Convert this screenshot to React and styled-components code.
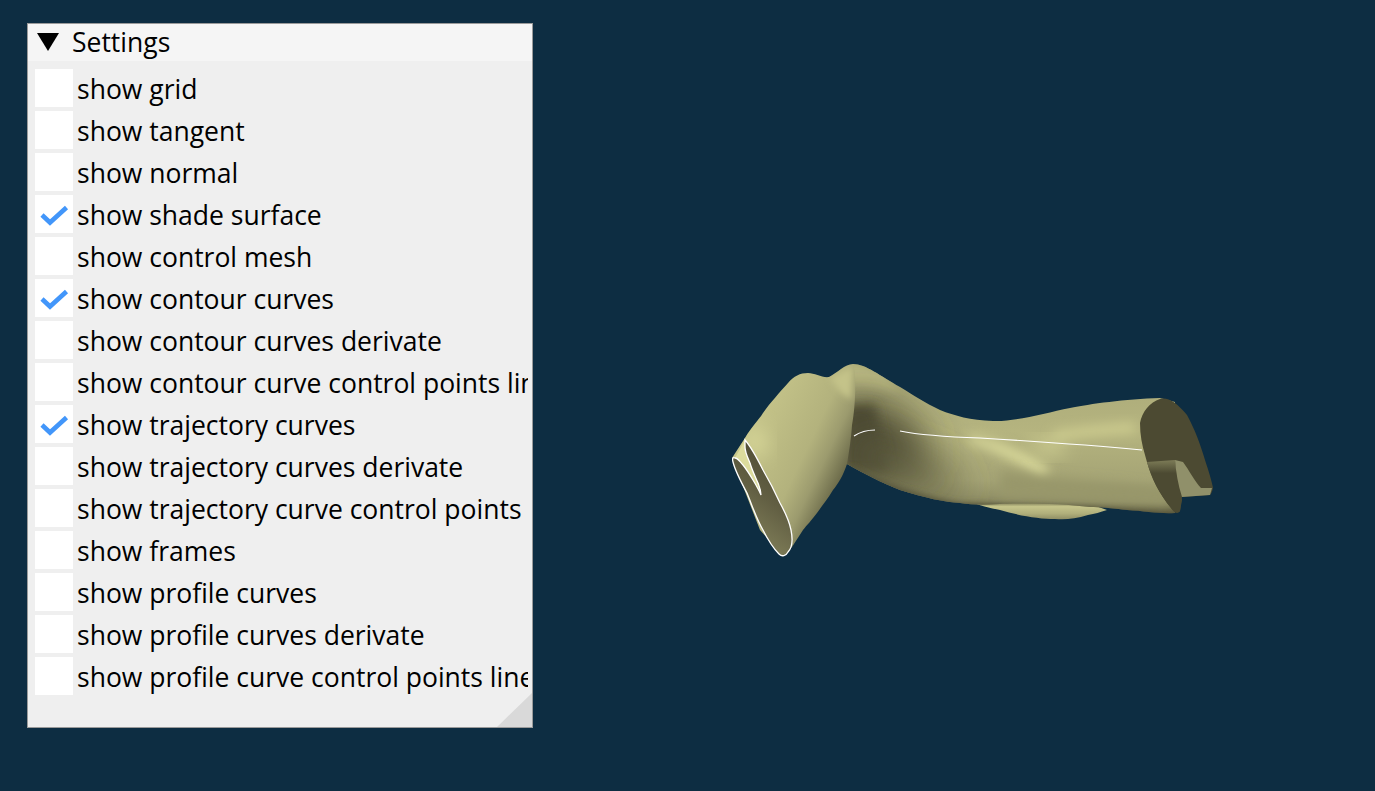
import React from 'react';
import styled, { createGlobalStyle } from 'styled-components';

const GlobalStyle = createGlobalStyle`
    html, body {
        margin: 0;
        padding: 0;
        background: #0d2d42;
    }
`;

const Page = styled.div`
    display: flex;
    width: 1375px;
    height: 791px;
    overflow: hidden;
    background: #0d2d42;
    font-family: 'Open Sans', 'Noto Sans', sans-serif;
`;

const Panel = styled.div`
    position: relative;
    box-sizing: border-box;
    flex: none;
    width: 506px;
    height: 705px;
    margin: 23px 0 0 27px;
    border: 1px solid #9a9a9a;
    background: #efefef;
    overflow: hidden;
`;

const TitleBar = styled.div`
    display: flex;
    align-items: center;
    gap: 13px;
    height: 37px;
    padding-left: 9px;
    background: #f5f5f5;
    color: #000;
    font-size: 26.5px;
    line-height: 35px;
`;

const Arrow = styled.span`
    width: 22px;
    height: 18px;
    margin-top: -1px;
    background: #000;
    clip-path: polygon(0 0, 100% 0, 50% 100%);
`;

const List = styled.div`
    display: flex;
    flex-direction: column;
    gap: 4px;
    padding: 8px 4px 0 7px;
`;

const Row = styled.div`
    display: flex;
    align-items: center;
    gap: 4px;
    height: 38px;
    overflow: hidden;
    white-space: nowrap;
    color: #000;
    font-size: 26.5px;
`;

const Label = styled.span`
    padding-top: 1px;
`;

const Box = styled.span`
    flex: none;
    width: 38px;
    height: 38px;
    background: #fff;
`;

const Grip = styled.div`
    position: absolute;
    right: 0;
    bottom: 0;
    width: 35px;
    height: 34px;
    background: #d9d9d9;
    clip-path: polygon(100% 0, 100% 100%, 0 100%);
`;

const Stage = styled.svg`
    flex: none;
    display: block;
    width: 842px;
    height: 791px;
`;

const settings = [
    { label: 'show grid' },
    { label: 'show tangent' },
    { label: 'show normal' },
    { label: 'show shade surface', on: true },
    { label: 'show control mesh' },
    { label: 'show contour curves', on: true },
    { label: 'show contour curves derivate' },
    { label: 'show contour curve control points lines' },
    { label: 'show trajectory curves', on: true },
    { label: 'show trajectory curves derivate' },
    { label: 'show trajectory curve control points lines' },
    { label: 'show frames' },
    { label: 'show profile curves' },
    { label: 'show profile curves derivate' },
    { label: 'show profile curve control points lines' },
];

const Check = () => (
    <svg width="38" height="38" viewBox="0 0 38 38">
        <path d="M7 20 L15 27.5 L31.5 12.5" fill="none" stroke="#4296fa" strokeWidth="4.6" />
    </svg>
);

const TUBE = `M853 364 C866 364 880 376 900 387 C915 396 925 403 940 410 C955 416 970 420 993 421
    C1015 422 1045 413 1070 408 C1090 404 1125 399 1160 398 L1175 402 L1175 513
    C1160 514 1145 511 1127 510 C1110 508 1100 507 1090 507 C1060 503 1020 503 1000 504
    C985 505 972 505 960 503 C945 502 925 498 900 490 C880 482 865 474 847 464 Z`;

const LOBE = `M732 458 L745 438 C752 426 758 421 763 413 C770 403 780 392 788 383 C794 376 800 373 808 373
    C815 373 822 378 829 377 C837 373 845 364 853 364 C857 378 855 410 852 425 C851 440 849 452 847 464
    C843 476 838 484 833 490 C827 500 822 506 817 513 C811 521 807 525 803 530
    L792 547 L783 556 L760 530 Z`;

const BELLY = `M966 500 C990 500 1040 498 1093 505 L1107 510 C1100 512 1095 514 1088 515
    C1075 519 1065 520 1055 519 C1040 519 1020 516 1000 510 C990 508 980 506 966 500 Z`;

const MOUTH = `M745 440 C752 448 758 460 763 470 C770 482 775 492 780 503 C785 512 789 520 791 530
    C793 540 792 548 788 552 C786 556 782 557 779 554 C773 548 768 540 763 530 C756 518 752 505 747 493
    C741 482 735 470 733 462 C732 458 733 457 735 458 C738 458 740 462 743 465 C747 470 750 475 753 480
    C756 485 759 490 761 495 C761 490 759 486 758 483 C755 476 752 470 750 463 C747 456 745 452 745 447 Z`;

const NOTCH = `M735 458 C738 458 740 462 743 465 C747 470 750 475 753 480 C756 485 759 490 761 495
    C761 490 759 486 758 483 C755 476 752 470 750 463 C747 456 745 452 745 447 L745 440 Z`;

const RIGHT_MOUTH = `M1140 423 C1142 412 1150 402 1160 399 C1168 397 1176 402 1187 415 C1195 430 1200 443 1205 460
    C1209 472 1212 482 1213 488 C1212 492 1211 494 1210 495 L1182 497 L1180 511 C1178 514 1174 513 1171 508
    C1160 495 1150 475 1145 455 C1142 445 1140 435 1140 423 Z`;

const Shape = () => (
    <Stage viewBox="533 0 842 791">
        <defs>
            <linearGradient id="tubeFill" x1="0" y1="0" x2="0" y2="1">
                <stop offset="0" stopColor="#a9a878" />
                <stop offset="0.45" stopColor="#b5b47f" />
                <stop offset="0.78" stopColor="#a5a475" />
                <stop offset="0.92" stopColor="#8f8e65" />
                <stop offset="1" stopColor="#5c5a3e" />
            </linearGradient>
            <linearGradient id="lobeFill" x1="0" y1="0" x2="1" y2="0.75">
                <stop offset="0" stopColor="#cfce93" />
                <stop offset="0.35" stopColor="#c0bf86" />
                <stop offset="0.6" stopColor="#b3b27d" />
                <stop offset="0.72" stopColor="#9c9b6e" />
                <stop offset="0.85" stopColor="#6d6c4b" />
                <stop offset="1" stopColor="#4c4a32" />
            </linearGradient>
            <linearGradient id="mouthFill" x1="0.2" y1="1" x2="0.6" y2="0">
                <stop offset="0" stopColor="#8a8960" />
                <stop offset="0.55" stopColor="#625f43" />
                <stop offset="1" stopColor="#4c4a32" />
            </linearGradient>
            <linearGradient id="bellyFill" x1="0" y1="0" x2="0" y2="1">
                <stop offset="0.1" stopColor="#6d6c4b" />
                <stop offset="0.35" stopColor="#c6c58b" />
                <stop offset="0.7" stopColor="#b0af7b" />
                <stop offset="1" stopColor="#8f8e64" />
            </linearGradient>
            <linearGradient id="bandFill" x1="0" y1="0" x2="0" y2="1">
                <stop offset="0" stopColor="#7d7c57" />
                <stop offset="0.25" stopColor="#4c4a32" />
                <stop offset="1" stopColor="#4c4a32" />
            </linearGradient>
            <clipPath id="tubeClip">
                <path d={TUBE} />
            </clipPath>
            <clipPath id="lobeClip">
                <path d={LOBE} />
            </clipPath>
            <filter id="soft6" x="-50%" y="-50%" width="200%" height="200%">
                <feGaussianBlur stdDeviation="6" />
            </filter>
            <filter id="soft10" x="-50%" y="-50%" width="200%" height="200%">
                <feGaussianBlur stdDeviation="10" />
            </filter>
            <filter id="soft20" x="-50%" y="-50%" width="200%" height="200%">
                <feGaussianBlur stdDeviation="20" />
            </filter>
            <filter id="soft3" x="-50%" y="-50%" width="200%" height="200%">
                <feGaussianBlur stdDeviation="3" />
            </filter>
        </defs>

        <path d={BELLY} fill="url(#bellyFill)" />

        <path d={TUBE} fill="url(#tubeFill)" />
        <g clipPath="url(#tubeClip)">
            {/* light crest running off the lobe */}
            <path d="M850 364 L880 372 L900 392 L870 388 L850 385 Z" fill="#bdbc84" filter="url(#soft3)" />
            {/* dark hollow behind the lobe */}
            <path d="M840 395 C880 395 915 415 925 445 C935 470 920 490 840 480 Z" fill="#4c4a32" filter="url(#soft20)" />
            <path d="M845 405 L875 405 L888 470 L845 470 Z" fill="#4c4a32" filter="url(#soft6)" />
            <path d="M850 462 C880 478 900 482 960 500 L950 470 C920 462 890 450 870 430 Z" fill="#5f5d41" filter="url(#soft20)" />
            <path d="M850 466 C880 482 925 498 960 503 L1000 504 L1090 507 L1175 514 L1175 519 L850 519 Z" fill="#55533a" filter="url(#soft3)" />
            {/* highlights */}
            <path d="M967 441 C990 448 1020 462 1043 478 L1050 470 C1030 455 1000 441 970 436 Z" fill="#dfdf9f" filter="url(#soft6)" />
            <path d="M1030 440 L1065 442 L1060 455 L1035 450 Z" fill="#d8d898" filter="url(#soft10)" />
            <path d="M1053 432 C1080 428 1105 425 1135 423 L1135 432 C1105 433 1080 437 1053 440 Z" fill="#d0cf91" filter="url(#soft6)" />
            <path d="M1000 470 C1050 480 1100 480 1170 490 L1170 505 L1000 495 Z" fill="#98976b" filter="url(#soft6)" />
        </g>

        <path d={LOBE} fill="url(#lobeFill)" />
        <g clipPath="url(#lobeClip)">
            <path d="M750 425 C760 430 770 440 765 455 L745 450 Z" fill="#dcdc9c" filter="url(#soft10)" />
            <path d="M830 378 L853 366 L851 400 L840 392 Z" fill="#c4c389" filter="url(#soft3)" />
        </g>

        {/* right opening */}
        <path d={RIGHT_MOUTH} fill="#4c4a32" />
        <path d="M1147 462 L1175 460 C1177 475 1178 490 1182 500 L1180 511 C1178 514 1174 513 1171 508 C1160 495 1151 478 1147 462 Z" fill="url(#bandFill)" />
        <path d="M1175 460 L1183 462 C1189 470 1195 482 1201 488 L1212 488 L1210 495 L1182 497 C1178 485 1176 472 1175 460 Z" fill="#90906a" />

        {/* left opening */}
        <path d={MOUTH} fill="url(#mouthFill)" />
        <path d={NOTCH} fill="#dcdc9d" />
        <path d={MOUTH} fill="none" stroke="#fff" strokeWidth="1.3" />

        {/* trajectory curves */}
        <path d="M854 436 C860 432 867 430 875 430" fill="none" stroke="#fff" strokeWidth="1.2" />
        <path d="M900 431 C920 435 950 437 980 438 C1030 441 1090 445 1142 450" fill="none" stroke="#fff" strokeWidth="1.2" />
    </Stage>
);

const App = () => (
    <Page>
        <GlobalStyle />
        <Panel>
            <TitleBar>
                <Arrow />
                Settings
            </TitleBar>
            <List>
                {settings.map((item) => (
                    <Row key={item.label}>
                        <Box>{item.on && <Check />}</Box>
                        <Label>{item.label}</Label>
                    </Row>
                ))}
            </List>
            <Grip />
        </Panel>
        <Shape />
    </Page>
);

export default App;
